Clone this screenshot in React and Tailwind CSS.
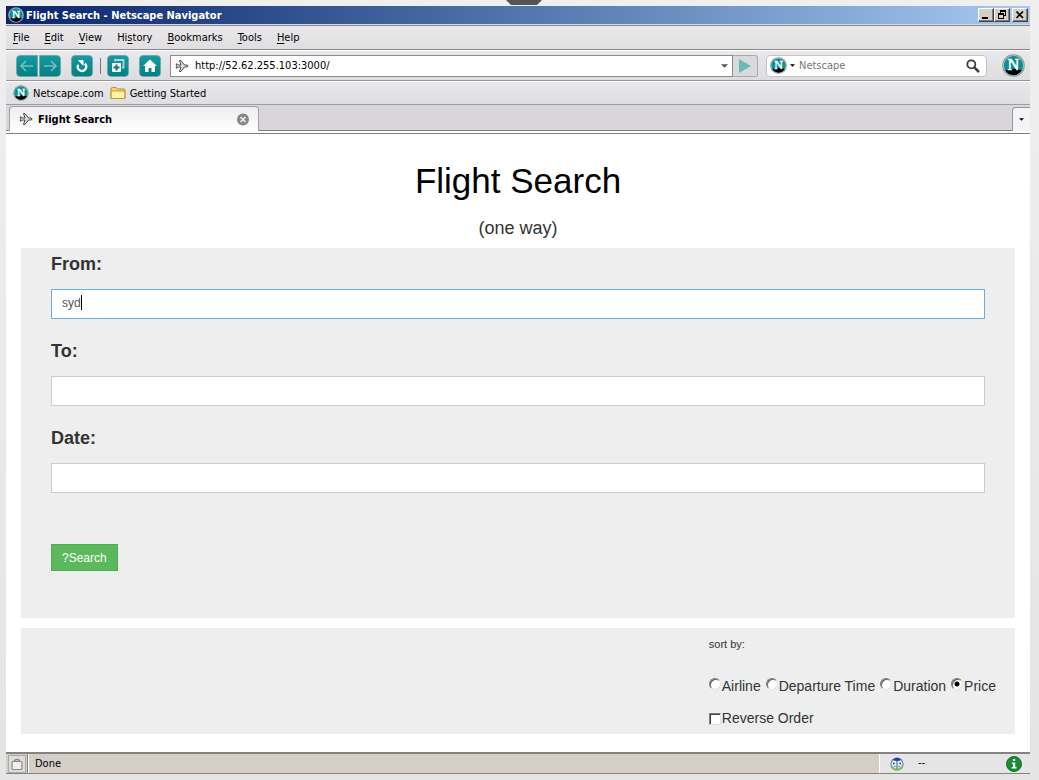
import React from "react";

const uiFont = "font-['DejaVu_Sans_Condensed','DejaVu_Sans',sans-serif]";
const pageFont = "font-['Liberation_Sans',Arial,sans-serif]";

function NetscapeLogo({ className }) {
  return (
    <svg viewBox="0 0 24 24" className={className} aria-hidden="true">
      <circle cx="12" cy="12" r="11.8" fill="#8b9a9c" />
      <circle cx="12" cy="12" r="10.8" fill="#b4c0c1" />
      <circle cx="12" cy="12" r="10" fill="#0b8f95" />
      <path d="M3.300 17 Q12 14 20.700 17 A10 10 0 0 1 3.300 17Z" fill="#000" />
      <text x="12" y="17.200" textAnchor="middle" fontFamily="Liberation Serif, serif" fontSize="17" fill="#fff" stroke="#fff" strokeWidth="0.600">
        N
      </text>
    </svg>
  );
}

function PlaneIcon() {
  return (
    <svg viewBox="0 0 14 14" className="h-[14px] w-[14px] shrink-0" aria-hidden="true">
      <path d="M1 5H2.500L3.500 6H6L4.500 1.500H6L9.500 6H12L13.200 7L12 8H9.500L6 12.500H4.500L6 8H3.500L2.500 9H1L2 7Z" fill="#ddd" stroke="#3a3a3a" strokeWidth="0.900" strokeLinejoin="round" />
    </svg>
  );
}

function Triangle({ className }) {
  return (
    <svg viewBox="0 0 8 4" className={className} aria-hidden="true">
      <path d="M0 0H8L4 4Z" fill="currentColor" />
    </svg>
  );
}

function MenuItem({ before = "", hot, after }) {
  return (
    <button type="button">
      {before}
      <span className="underline underline-offset-2">{hot}</span>
      {after}
    </button>
  );
}

function ToolButton({ label, shape = "rounded-[4px]", children }) {
  return (
    <button
      type="button"
      aria-label={label}
      className={`flex h-[22px] w-[22px] items-center justify-center border border-[#6fa9ab] bg-linear-to-b from-[#159a9f] to-[#047f84] ${shape}`}
    >
      <svg viewBox="0 0 20 20" className="h-5 w-5 shrink-0" fill="none" aria-hidden="true">
        {children}
      </svg>
    </button>
  );
}

function WindowButton({ label, children }) {
  return (
    <button
      type="button"
      aria-label={label}
      className="h-[14px] w-4 border border-t-white border-r-[#404040] border-b-[#404040] border-l-white bg-[#d4d0c8] shadow-[inset_-1px_-1px_0_#808080]"
    >
      <svg viewBox="0 0 14 12" className="h-3 w-[14px]" fill="none" stroke="#000" shapeRendering="crispEdges" aria-hidden="true">
        {children}
      </svg>
    </button>
  );
}

function Field({ id, label, value = "", active }) {
  return (
    <div className="mb-5">
      <label htmlFor={id} className="block text-[18px] leading-6 font-bold text-[#333]">
        {label}
      </label>
      <div className="relative mt-[13px]">
        <input
          id={id}
          type="text"
          defaultValue={value}
          className={`block h-[30px] w-full border bg-white px-[10px] pb-[3px] text-[12px] text-[#555] outline-none ${active ? "border-[#66afe9]" : "border-[#ccc]"}`}
        />
        {active && <span className="absolute top-[6px] left-[30px] h-[15px] w-px bg-black" />}
      </div>
    </div>
  );
}

function SortOption({ label, checked }) {
  return (
    <label className="flex">
      <input
        type="radio"
        name="sort"
        defaultChecked={checked}
        className="mt-[2px] mr-px h-3 w-3 appearance-none rounded-full border border-t-[#777] border-r-[#e4e0da] border-b-[#e4e0da] border-l-[#777] bg-white shadow-[inset_1px_1px_0_#606060] checked:bg-[radial-gradient(circle,#000_2px,#fff_3px)]"
      />
      {label}
    </label>
  );
}

function TitleBar() {
  return (
    <header className="flex h-[19px] items-center border-b border-[#d6dbe8] bg-linear-to-r from-[#0a246a] to-[#a6caf0] pr-[2px] pl-[2px]">
      <NetscapeLogo className="h-4 w-4" />
      <span className="ml-[2px] flex-1 pt-[2px] text-[11px] leading-4 font-bold text-white">Flight Search - Netscape Navigator</span>
      <div className="flex">
        <WindowButton label="Minimize">
          <path d="M3 9H9" strokeWidth="2" />
        </WindowButton>
        <WindowButton label="Restore">
          <path d="M5 1.500H11M5 2.500H11M10.500 2V7M9 6.500H11M5.500 2V4M3 4.500H9M3 5.500H9M3.500 5V10M8.500 5V10M3 9.500H9" />
        </WindowButton>
        <span className="w-[2px]" />
        <WindowButton label="Close">
          <path d="M3.500 2.500L10 9M10 2.500L3.500 9" strokeWidth="1.700" shapeRendering="auto" />
        </WindowButton>
      </div>
    </header>
  );
}

function Toolbar() {
  return (
    <div className="flex h-[31px] items-center border-t border-b border-t-white border-b-[#96949a] bg-linear-to-b from-[#e9e8eb] to-[#dddcdf] pr-[5px] pl-[10px]">
      <ToolButton label="Back" shape="rounded-l-[4px]">
        <path d="M16 10H4.500M9 5L4 10L9 15" stroke="#6fc1c3" strokeWidth="1.600" />
      </ToolButton>
      <span className="w-px" />
      <ToolButton label="Forward" shape="rounded-r-[4px]">
        <path d="M4 10H15.500M11 5L16 10L11 15" stroke="#6fc1c3" strokeWidth="1.600" />
      </ToolButton>
      <span className="w-[10px]" />
      <ToolButton label="Reload">
        <path d="M6.200 8.800A4.200 4.200 0 1 0 12.800 7.600" stroke="#fff" strokeWidth="2.200" />
        <path d="M6 4H11.500V10L9.300 7.800L8 6.500Z" fill="#fff" />
      </ToolButton>
      <span className="mr-[6px] ml-[7px] h-4 w-px bg-[#77757b]" />
      <ToolButton label="New tab">
        <path d="M7 5.500V4H15.500V11.500H14" stroke="#a5d6d8" strokeWidth="1.800" />
        <rect x="4" y="7" width="9" height="9" rx="1" fill="#fff" />
        <path d="M8.500 8.500V14.500M5.500 11.500H11.500" stroke="#08777c" strokeWidth="2" />
      </ToolButton>
      <span className="w-[10px]" />
      <ToolButton label="Home">
        <path d="M10 3.500L17 10H15V16H11.500V12H8.500V16H5V10H3Z" fill="#fff" />
      </ToolButton>
      <div className="ml-[9px] flex h-[22px] flex-1 items-center border border-[#8d8b91] bg-white pl-1">
        <PlaneIcon />
        <input aria-label="Address" defaultValue="http://52.62.255.103:3000/" className="ml-[6px] min-w-0 flex-1 bg-transparent pt-[2px] text-[11px] text-black outline-none" />
        <button type="button" aria-label="Show history" className="mr-1 text-[#555]">
          <Triangle className="h-1 w-[7px]" />
        </button>
      </div>
      <button type="button" aria-label="Go" className="flex h-[22px] w-[25px] items-center justify-center rounded-r-[3px] border border-l-0 border-[#a9a8ac] bg-[#d9d9dc]">
        <svg viewBox="0 0 14 14" className="h-[14px] w-[14px]" aria-hidden="true">
          <path d="M1 0L13 7L1 14Z" fill="#6cb9b3" />
        </svg>
      </button>
      <div className="ml-2 flex h-[22px] w-[221px] items-center rounded-[4px] border border-[#c3c2c6] bg-white pr-[6px] pl-[3px]">
        <NetscapeLogo className="h-[17px] w-[17px]" />
        <Triangle className="ml-[3px] h-[3px] w-[5px]" />
        <input aria-label="Search the web" placeholder="Netscape" className="ml-[4px] min-w-0 flex-1 bg-transparent pt-[2px] text-[11px] outline-none placeholder:text-[#777]" />
        <svg viewBox="0 0 14 14" className="h-[14px] w-[14px]" fill="none" stroke="#3e3e42" aria-hidden="true">
          <circle cx="5.300" cy="5.300" r="4" strokeWidth="1.800" />
          <path d="M8.300 8.300L13 13" strokeWidth="2.500" />
        </svg>
      </div>
      <NetscapeLogo className="ml-[15px] h-[23px] w-[23px]" />
    </div>
  );
}

function StatusBar() {
  return (
    <footer className="flex h-[22px] items-center border-t-2 border-b border-t-[#85837f] border-b-[#85837f] bg-[#d4d0c8] text-[11px] text-black">
      <span className="ml-[2px] flex h-[18px] w-[18px] items-center justify-center border border-[#aaa] bg-[#deded9]">
        <svg viewBox="0 0 14 14" className="h-[14px] w-[14px]" fill="none" stroke="#888" aria-hidden="true">
          <path d="M4.500 5V4.500Q4.500 2.500 7 2.500T9.500 4.500V5" strokeWidth="1.600" />
          <rect x="2" y="4.500" width="10" height="8" rx="1" fill="#eee" strokeWidth="1.200" />
        </svg>
      </span>
      <span className="ml-px h-full w-[2px] border-l border-[#808080] bg-white" />
      <span className="ml-[6px] flex-1 pt-[2px]">Done</span>
      <div className="flex h-full w-[151px] items-center border-l border-white bg-[#e5e4e7] pr-2 pl-[10px]">
        <svg viewBox="0 0 14 14" className="h-[14px] w-[14px]" aria-hidden="true">
          <circle cx="7" cy="7" r="6" fill="#e9eff2" stroke="#6688b8" strokeWidth="1.200" />
          <path d="M2.800 3Q7 -1.500 11.200 3Q7 5 2.800 3Z" fill="#1c3fa0" />
          <path d="M1.800 10Q7 15.500 12.200 10" fill="none" stroke="#7cc142" strokeWidth="1.800" />
          <path d="M7 4V12" stroke="#4a72a8" strokeWidth="1.200" />
          <circle cx="3.800" cy="6.500" r="0.900" fill="#234a78" />
          <circle cx="10.200" cy="6.500" r="0.900" fill="#234a78" />
          <circle cx="4.800" cy="9.500" r="0.700" fill="#367c50" />
          <circle cx="9.200" cy="9.500" r="0.700" fill="#367c50" />
        </svg>
        <span className="ml-[14px] flex-1">--</span>
        <svg viewBox="0 0 16 16" className="h-4 w-4" aria-hidden="true">
          <circle cx="8" cy="8" r="7.500" fill="#1a8a34" stroke="#12702a" />
          <path d="M7 3H9.200V5H7ZM6 6.500H9.200V11H10.500V12.500H5.800V11H7V8H6Z" fill="#fff" />
        </svg>
      </div>
    </footer>
  );
}

export default function App() {
  return (
    <div className={`flex min-h-screen flex-col bg-linear-to-b from-[#efefef] to-[#e4e4e4] pt-[6px] pr-[9px] pb-[6px] pl-[6px] ${uiFont}`}>
      <svg viewBox="0 0 36 5" className="absolute top-0 left-1/2 -ml-[14px] h-[5px] w-9" aria-hidden="true">
        <path d="M0 0H36L31 5H5Z" fill="#555" />
      </svg>
      <TitleBar />
      <nav className="flex h-[25px] items-center gap-[15px] border-t border-b border-[#8a888e] bg-linear-to-b from-[#ebe9e9] to-[#dfdee1] px-[7px] pt-[2px] text-[11px] text-black">
        <MenuItem hot="F" after="ile" />
        <MenuItem hot="E" after="dit" />
        <MenuItem hot="V" after="iew" />
        <MenuItem before="Hi" hot="s" after="tory" />
        <MenuItem hot="B" after="ookmarks" />
        <MenuItem hot="T" after="ools" />
        <MenuItem hot="H" after="elp" />
      </nav>
      <Toolbar />
      <div className="flex h-6 items-center border-t border-b border-t-white border-b-[#9f9da2] bg-linear-to-b from-[#e8e7ea] to-[#dfdee1] px-[7px] text-[11px] text-black">
        <a href="#netscape" className="flex items-center gap-1">
          <NetscapeLogo className="h-4 w-4" />
          <span className="pt-[2px]">Netscape.com</span>
        </a>
        <a href="#getting-started" className="ml-[6px] flex items-center gap-1">
          <svg viewBox="0 0 16 14" className="h-[14px] w-4" aria-hidden="true">
            <path d="M1 3Q1 1.500 2.500 1.500H6L7.500 3H14Q15 3 15 4V12.500H1Z" fill="#f5d36b" stroke="#b58a2c" />
            <path d="M1.200 12.500V6Q1.200 5 2.200 5H14.800V11.500L13.800 12.500Z" fill="#fdf0a8" stroke="#c59a3a" />
          </svg>
          <span className="pt-[2px]">Getting Started</span>
        </a>
      </div>
      <div className="flex h-[29px] items-end justify-between border-b border-[#7f7d82] bg-[#d8d6d9]">
        <div className="flex h-full flex-1 items-end justify-between border-b-2 border-white pl-[3px] shadow-[inset_0_-1px_0_#7f7d82]">
          <div className="flex h-[25px] w-[250px] items-center rounded-t-[4px] border border-b-0 border-[#a3a1a7] bg-linear-to-b from-[#ededef] to-white pr-2 pl-[9px]">
            <PlaneIcon />
            <span className="ml-[5px] flex-1 pt-[2px] text-[11px] font-bold text-black">Flight Search</span>
            <button type="button" aria-label="Close tab">
              <svg viewBox="0 0 14 14" className="h-[14px] w-[14px]" aria-hidden="true">
                <circle cx="7" cy="7.500" r="6" fill="#88868a" />
                <path d="M4.500 5L9.500 10M9.500 5L4.500 10" stroke="#eee" strokeWidth="1.500" />
              </svg>
            </button>
          </div>
          <button type="button" aria-label="List all tabs" className="flex h-6 w-[18px] items-center justify-center rounded-tl-[4px] border-t border-l border-[#98969c] bg-[#f4f3f5] text-black">
            <Triangle className="h-[3px] w-[5px]" />
          </button>
        </div>
      </div>
      <main className={`flex-1 bg-white px-[15px] pt-[22px] pb-[18px] ${pageFont}`}>
        <h1 className="text-center text-[35px] leading-[50px] text-black">Flight Search</h1>
        <p className="mt-[9px] mb-[7px] text-center text-[18px] leading-[26px] text-[#333]">(one way)</p>
        <form className="bg-[#eee] px-[30px] pt-1 pb-[47px]">
          <Field id="from" label="From:" value="syd" active />
          <Field id="to" label="To:" />
          <Field id="date" label="Date:" />
          <button type="button" className="mt-[51px] block h-[27px] border border-[#4cae4c] bg-[#5cb85c] px-[10px] text-[12px] text-white">
            ?Search
          </button>
        </form>
        <section className="mt-[10px] flex justify-end bg-[#eee] pt-2 pr-[19px] pb-[6px] text-[#333]">
          <div>
            <p className="text-[11px] leading-4">sort by:</p>
            <div className="mt-6 flex gap-[5px] text-[14px] leading-5">
              <SortOption label="Airline" />
              <SortOption label="Departure Time" />
              <SortOption label="Duration" />
              <SortOption label="Price" checked />
            </div>
            <label className="mt-3 flex text-[14px] leading-5">
              <input
                type="checkbox"
                className="mt-[5px] mr-px h-3 w-3 appearance-none border border-t-[#808080] border-r-[#e4e0da] border-b-[#e4e0da] border-l-[#808080] bg-white shadow-[inset_1px_1px_0_#404040]"
              />
              Reverse Order
            </label>
          </div>
        </section>
      </main>
      <StatusBar />
    </div>
  );
}
